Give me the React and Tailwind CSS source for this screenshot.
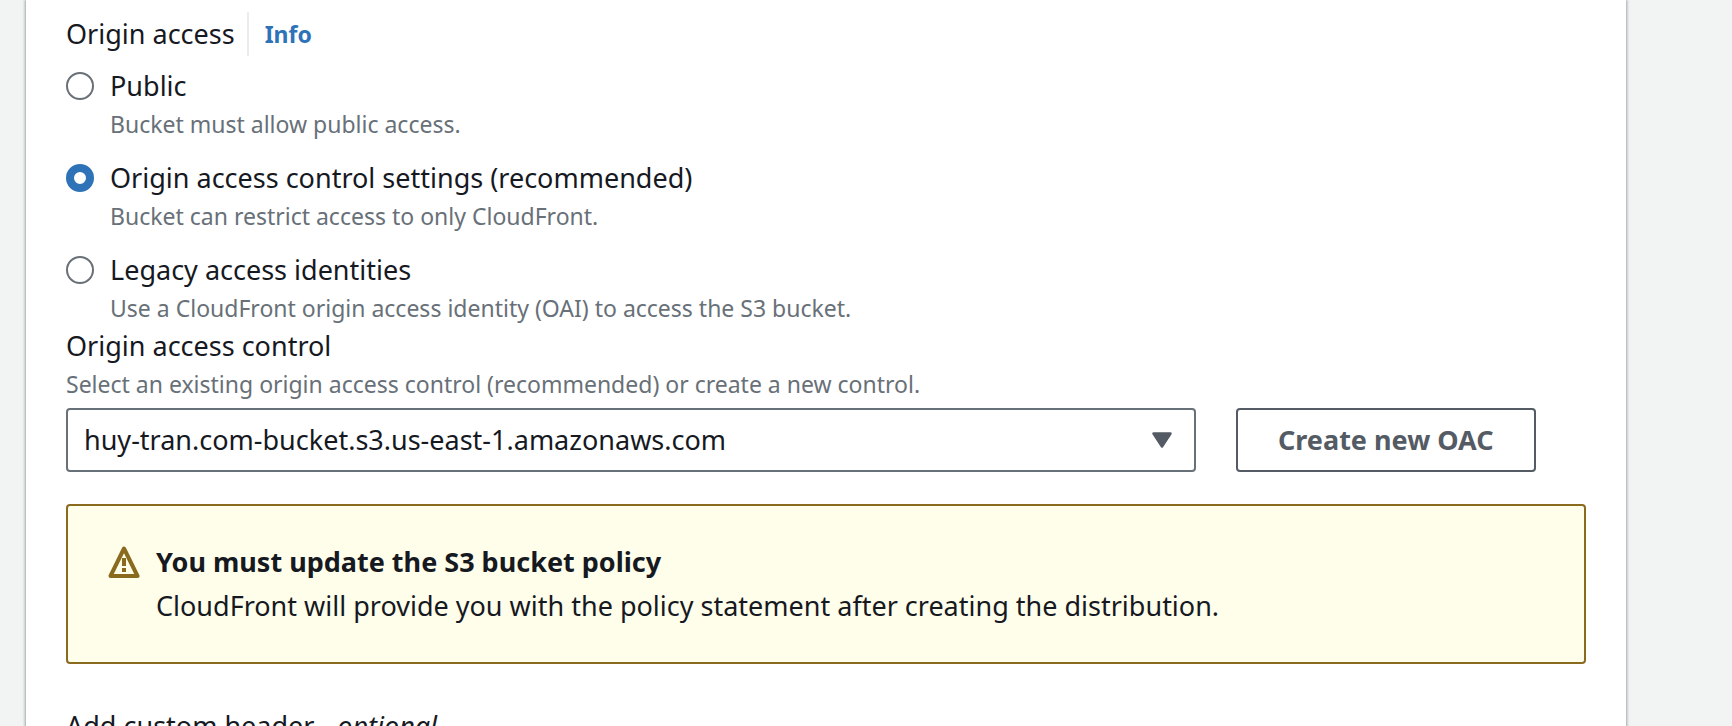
import { useState } from "react";

const OPTIONS = [
  {
    id: "public",
    label: "Public",
    description: "Bucket must allow public access.",
  },
  {
    id: "oac",
    label: "Origin access control settings (recommended)",
    description: "Bucket can restrict access to only CloudFront.",
  },
  {
    id: "oai",
    label: "Legacy access identities",
    description:
      "Use a CloudFront origin access identity (OAI) to access the S3 bucket.",
  },
];

function RadioOption({ option, checked, onChange }) {
  return (
    <div className="flex gap-4">
      <input
        type="radio"
        id={option.id}
        name="origin-access"
        checked={checked}
        onChange={() => onChange(option.id)}
        aria-describedby={`${option.id}-description`}
        className="mt-2 size-7 shrink-0 appearance-none rounded-full border-2 border-[#687078] bg-white checked:border-8 checked:border-[#2e73b8]"
      />
      <div>
        <label htmlFor={option.id} className="block">
          {option.label}
        </label>
        <p
          id={`${option.id}-description`}
          className="text-[23px] leading-8 text-[#687078]"
        >
          {option.description}
        </p>
      </div>
    </div>
  );
}

function WarningIcon() {
  return (
    <svg
      viewBox="0 0 32 32"
      className="mt-1.5 size-8 shrink-0"
      fill="none"
      aria-hidden="true"
    >
      <path
        d="M16 2.5 L29.5 30 H2.5 Z"
        stroke="#8a6a1c"
        strokeWidth="4"
        strokeLinejoin="round"
      />
      <path d="M16 12v8M16 22v4" stroke="#8a6a1c" strokeWidth="4" />
    </svg>
  );
}

export default function App() {
  const [access, setAccess] = useState("oac");

  return (
    <div className="h-screen overflow-hidden bg-[#f2f3f3] pr-[106px] pl-[26px] font-['Noto_Sans','Open_Sans',sans-serif] text-[27px] leading-[44px] text-[#16191f]">
      <main className="min-h-screen bg-white px-10 pt-3 shadow-[0_0_2px_0_rgba(0,28,36,0.3),2px_0_2px_0_rgba(0,28,36,0.15),-2px_0_2px_0_rgba(0,28,36,0.15)]">
        <fieldset>
          <legend className="mb-2 flex">
            <span className="mr-4 border-r-2 border-[#eaeded] pr-3">
              Origin access
            </span>
            <a href="#info" className="text-[23px] font-bold text-[#2e73b8]">
              Info
            </a>
          </legend>
          <div className="flex flex-col gap-4">
            {OPTIONS.map((option) => (
              <RadioOption
                key={option.id}
                option={option}
                checked={access === option.id}
                onChange={setAccess}
              />
            ))}
          </div>
        </fieldset>

        <label htmlFor="oac-select" className="block">
          Origin access control
        </label>
        <p
          id="oac-select-description"
          className="text-[23px] leading-8 text-[#687078]"
        >
          Select an existing origin access control (recommended) or create a new
          control.
        </p>
        <div className="mt-2 grid grid-cols-12 gap-10">
          <div className="relative col-span-9">
            <select
              id="oac-select"
              aria-describedby="oac-select-description"
              className="block h-16 w-full appearance-none rounded-sm border-2 border-[#687078] bg-white pr-14 pl-4"
            >
              <option>huy-tran.com-bucket.s3.us-east-1.amazonaws.com</option>
            </select>
            <svg
              viewBox="0 0 20 16"
              className="pointer-events-none absolute top-6 right-6 h-4 w-5"
              aria-hidden="true"
            >
              <path
                d="M1.5 1.5h17L10 14.5Z"
                fill="#545b64"
                stroke="#545b64"
                strokeWidth="2.5"
                strokeLinejoin="round"
              />
            </svg>
          </div>
          <div className="col-span-3">
            <button
              type="button"
              className="h-16 rounded-sm border-2 border-[#545b64] bg-white px-10 font-bold whitespace-nowrap text-[#545b64]"
            >
              Create new OAC
            </button>
          </div>
        </div>

        <div
          role="alert"
          className="mt-8 flex gap-4 rounded-sm border-2 border-[#8a6a1c] bg-[#fffeeb] px-10 py-[34px]"
        >
          <WarningIcon />
          <div>
            <p className="font-bold">You must update the S3 bucket policy</p>
            <p>
              CloudFront will provide you with the policy statement after
              creating the distribution.
            </p>
          </div>
        </div>

        <h3 className="mt-10">
          Add custom header - <em>optional</em>
        </h3>
      </main>
    </div>
  );
}
